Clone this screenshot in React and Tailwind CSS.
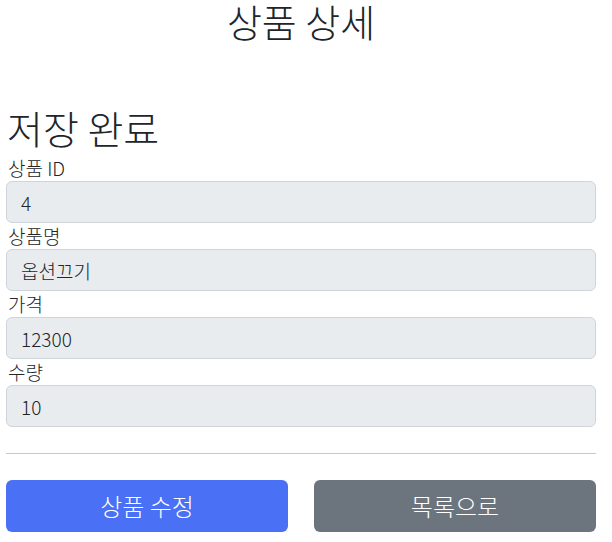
export default function App() {
  const fields = [
    { label: "상품 ID", value: "4" },
    { label: "상품명", value: "옵션끄기" },
    { label: "가격", value: "12300" },
    { label: "수량", value: "10" },
  ];

  return (
    <div
      className="min-h-screen bg-white text-[#212529] font-light"
      style={{ fontFamily: '"Noto Sans CJK KR", "Noto Sans", sans-serif' }}
    >
      <div className="w-[590px] ml-[6px]">
        <div className="text-center">
          <h2 className="text-[38px] leading-[42px] font-light">상품 상세</h2>
        </div>

        <h2 className="mt-[60px] text-[39px] leading-[50px] font-light pl-[1px]">저장 완료</h2>

        <div className="mt-[3px]">
          {fields.map((f) => (
            <div key={f.label}>
              <label className="block text-[19px] leading-[26px] pl-[2px]">{f.label}</label>
              <input
                disabled
                value={f.value}
                readOnly
                className="block w-full h-[42px] px-[14px] text-[19px] font-light text-[#212529] bg-[#e9ecef] border border-[#ced4da] rounded-[6px]"
              />
            </div>
          ))}
        </div>

        <hr className="mt-[26px] border-0 border-t border-[#c8c8c8]" />

        <div className="mt-[26px] flex gap-[26px]">
          <button className="flex-1 h-[52px] rounded-[6px] bg-[#4a70f5] text-white text-[24px] font-light">
            상품 수정
          </button>
          <button className="flex-1 h-[52px] rounded-[6px] bg-[#6c757d] text-white text-[24px] font-light">
            목록으로
          </button>
        </div>
      </div>
    </div>
  );
}
